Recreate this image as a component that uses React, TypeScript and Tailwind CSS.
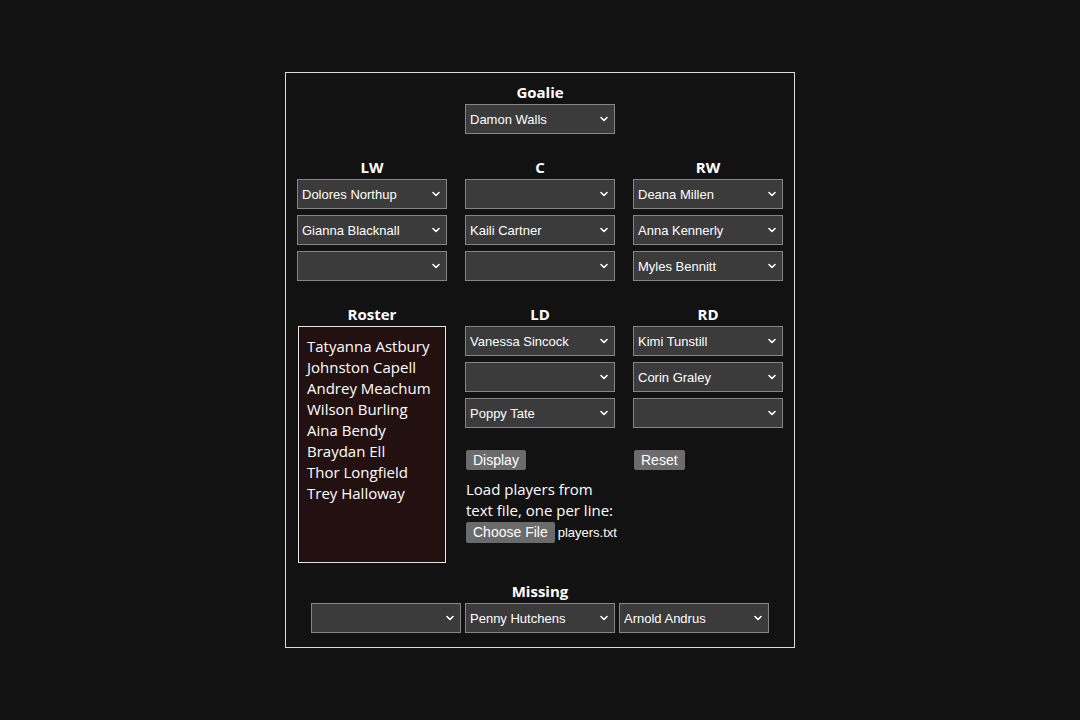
import React from "react";
import { ChevronDown } from "lucide-react";

const players = [
  "Tatyanna Astbury",
  "Johnston Capell",
  "Andrey Meachum",
  "Wilson Burling",
  "Aina Bendy",
  "Braydan Ell",
  "Thor Longfield",
  "Trey Halloway",
  "Damon Walls",
  "Dolores Northup",
  "Gianna Blacknall",
  "Kaili Cartner",
  "Deana Millen",
  "Anna Kennerly",
  "Myles Bennitt",
  "Vanessa Sincock",
  "Poppy Tate",
  "Kimi Tunstill",
  "Corin Graley",
  "Penny Hutchens",
  "Arnold Andrus",
];

const roster = players.slice(0, 8);

const PlayerSelect = ({ value = "" }: { value?: string }) => (
  <div className="relative w-[150px] h-[30px]">
    <select
      defaultValue={value}
      className="appearance-none w-full h-full bg-[#3b3b3b] border border-[#858585] text-white text-[13px] pl-[4px] pr-6 pt-[1px] outline-none"
      style={{ fontFamily: '"Liberation Sans", Arial, sans-serif' }}
    >
      <option value=""></option>
      {players.map((p) => (
        <option key={p} value={p}>
          {p}
        </option>
      ))}
    </select>
    <ChevronDown
      size={12}
      strokeWidth={3.2}
      className="absolute right-[5px] top-[9px] text-white pointer-events-none"
    />
  </div>
);

const Label = ({ text }: { text: string }) => (
  <div className="h-5 mb-[2px] text-center text-white font-bold text-[15px] leading-5">{text}</div>
);

const GrayButton = ({ text }: { text: string }) => (
  <button
    className="bg-[#6b6b6b] text-white text-[14px] rounded-[2px] px-[7px] h-5 leading-5"
    style={{ fontFamily: '"Liberation Sans", Arial, sans-serif' }}
  >
    {text}
  </button>
);

const Column = ({ label, values }: { label: string; values: string[] }) => (
  <div className="flex flex-col">
    <Label text={label} />
    <div className="flex flex-col gap-[6px]">
      {values.map((v, i) => (
        <PlayerSelect key={i} value={v} />
      ))}
    </div>
  </div>
);

export default function App() {
  return (
    <div
      className="min-h-screen bg-[#121212] flex justify-center pt-[72px]"
      style={{ fontFamily: '"Open Sans", "Noto Sans", sans-serif' }}
    >
      <div className="w-[510px] h-[576px] border border-[#dcdcdc] px-[11px] pt-[9px] pb-[14px]">
        {/* goalie */}
        <div className="flex flex-col items-center">
          <Label text="Goalie" />
          <PlayerSelect value="Damon Walls" />
        </div>

        {/* forwards */}
        <div className="mt-[23px] grid grid-cols-[150px_150px_150px] gap-x-[18px]">
          <Column label="LW" values={["Dolores Northup", "Gianna Blacknall", ""]} />
          <Column label="C" values={["", "Kaili Cartner", ""]} />
          <Column label="RW" values={["Deana Millen", "Anna Kennerly", "Myles Bennitt"]} />
        </div>

        {/* roster + defense */}
        <div className="mt-[23px] grid grid-cols-[150px_150px_150px] gap-x-[18px]">
          <div className="flex flex-col">
            <Label text="Roster" />
            <div className="ml-[1px] w-[148px] h-[237px] border border-[#e6e6e6] bg-[#231111] pl-[8px] pt-[9px] text-white text-[15px] leading-[21px]">
              {roster.map((p) => (
                <div key={p}>{p}</div>
              ))}
            </div>
          </div>
          <div className="flex flex-col">
            <Column label="LD" values={["Vanessa Sincock", "", "Poppy Tate"]} />
            <div className="mt-[22px] ml-[1px] flex">
              <GrayButton text="Display" />
            </div>
            <div className="mt-[9px] ml-[1px] text-white text-[15px] leading-[21px] whitespace-nowrap">
              Load players from
              <br />
              text file, one per line:
            </div>
            <div className="mt-[1px] ml-[1px] flex items-center gap-[3px] whitespace-nowrap">
              <button
                className="bg-[#6b6b6b] text-white text-[14px] rounded-[2px] px-[7px] h-[21px] leading-[21px]"
                style={{ fontFamily: '"Liberation Sans", Arial, sans-serif' }}
              >
                Choose File
              </button>
              <span
                className="text-white text-[13px]"
                style={{ fontFamily: '"Liberation Sans", Arial, sans-serif' }}
              >
                players.txt
              </span>
            </div>
          </div>
          <div className="flex flex-col">
            <Column label="RD" values={["Kimi Tunstill", "Corin Graley", ""]} />
            <div className="mt-[22px] ml-[1px] flex">
              <GrayButton text="Reset" />
            </div>
          </div>
        </div>

        {/* missing */}
        <div className="mt-[18px] flex flex-col items-center">
          <Label text="Missing" />
          <div className="flex gap-[4px]">
            <PlayerSelect value="" />
            <PlayerSelect value="Penny Hutchens" />
            <PlayerSelect value="Arnold Andrus" />
          </div>
        </div>
      </div>
    </div>
  );
}
